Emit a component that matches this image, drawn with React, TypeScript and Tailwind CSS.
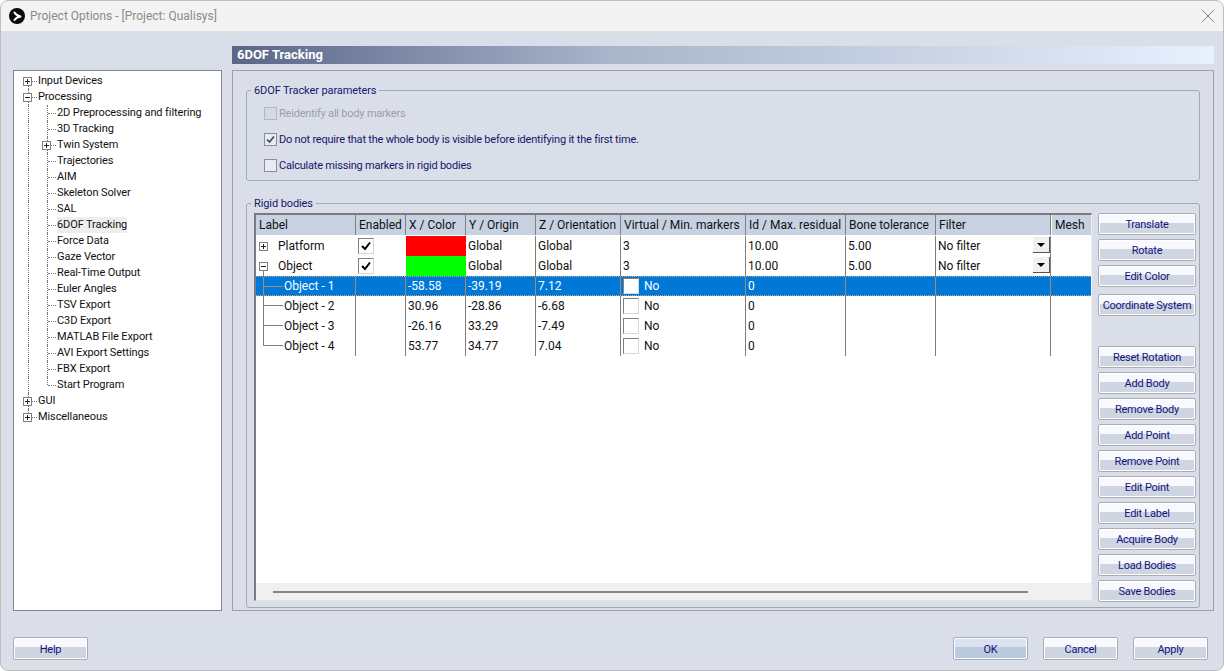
import { X } from 'lucide-react';

type TreeItem = { label: string; level: 0 | 1; box?: '+' | '-'; last?: boolean; first?: boolean };

const treeItems: TreeItem[] = [
  { label: 'Input Devices', level: 0, box: '+', first: true },
  { label: 'Processing', level: 0, box: '-' },
  { label: '2D Preprocessing and filtering', level: 1 },
  { label: '3D Tracking', level: 1 },
  { label: 'Twin System', level: 1, box: '+' },
  { label: 'Trajectories', level: 1 },
  { label: 'AIM', level: 1 },
  { label: 'Skeleton Solver', level: 1 },
  { label: 'SAL', level: 1 },
  { label: '6DOF Tracking', level: 1 },
  { label: 'Force Data', level: 1 },
  { label: 'Gaze Vector', level: 1 },
  { label: 'Real-Time Output', level: 1 },
  { label: 'Euler Angles', level: 1 },
  { label: 'TSV Export', level: 1 },
  { label: 'C3D Export', level: 1 },
  { label: 'MATLAB File Export', level: 1 },
  { label: 'AVI Export Settings', level: 1 },
  { label: 'FBX Export', level: 1 },
  { label: 'Start Program', level: 1, last: true },
  { label: 'GUI', level: 0, box: '+' },
  { label: 'Miscellaneous', level: 0, box: '+', last: true },
];

const sideButtons = [
  { label: 'Translate', cls: 'mb-[4px]' },
  { label: 'Rotate', cls: 'mb-[4px]' },
  { label: 'Edit Color', cls: 'mb-[7px]' },
  { label: 'Coordinate System', cls: 'mb-[30px]' },
  { label: 'Reset Rotation', cls: 'mb-[4px]' },
  { label: 'Add Body', cls: 'mb-[4px]' },
  { label: 'Remove Body', cls: 'mb-[4px]' },
  { label: 'Add Point', cls: 'mb-[4px]' },
  { label: 'Remove Point', cls: 'mb-[4px]' },
  { label: 'Edit Point', cls: 'mb-[4px]' },
  { label: 'Edit Label', cls: 'mb-[4px]' },
  { label: 'Acquire Body', cls: 'mb-[4px]' },
  { label: 'Load Bodies', cls: 'mb-[4px]' },
  { label: 'Save Bodies', cls: '' },
];

const points = [
  { label: 'Object - 1', x: '-58.58', y: '-39.19', z: '7.12', selected: true },
  { label: 'Object - 2', x: '30.96', y: '-28.86', z: '-6.68' },
  { label: 'Object - 3', x: '-26.16', y: '33.29', z: '-7.49' },
  { label: 'Object - 4', x: '53.77', y: '34.77', z: '7.04', last: true },
];

function ExpandBox({ sign, className }: { sign: '+' | '-'; className: string }) {
  return (
    <span className={`absolute w-[9px] h-[9px] bg-white border border-[#808080] ${className}`}>
      <span className="absolute left-[1px] top-[3px] w-[5px] h-px bg-[#222]" />
      {sign === '+' && <span className="absolute left-[3px] top-[1px] w-px h-[5px] bg-[#222]" />}
    </span>
  );
}

function Guide({ item, own }: { item: TreeItem; own: boolean }) {
  const vertical = own
    ? item.level === 0
      ? item.first
        ? 'top-2 bottom-0'
        : item.last
          ? 'top-0 h-2'
          : 'top-0 bottom-0'
      : item.last
        ? 'top-0 h-2'
        : 'top-0 bottom-0'
    : 'top-0 bottom-0';
  return (
    <span className="relative w-[19px] h-4 shrink-0">
      <span className={`absolute left-[9px] w-0 border-l border-dotted border-[#777] ${vertical}`} />
      {own && <span className="absolute left-[10px] top-2 w-[8px] h-0 border-t border-dotted border-[#777]" />}
      {own && item.box && <ExpandBox sign={item.box} className="left-[4px] top-[4px]" />}
    </span>
  );
}

function TreeRow({ item }: { item: TreeItem }) {
  return (
    <div className="flex items-center h-4">
      {item.level === 0 ? (
        <Guide item={item} own />
      ) : (
        <>
          <Guide item={{ label: '', level: 0 }} own={false} />
          <Guide item={item} own />
        </>
      )}
      <span className={`text-[11px] leading-4 tracking-[-0.1px] whitespace-nowrap text-[#111] ${item.label === '6DOF Tracking' ? 'bg-[#eeeeee]' : ''}`}>
        {item.label}
      </span>
    </div>
  );
}

function WinButton({ label, className = '', pressed = false }: { label: string; className?: string; pressed?: boolean }) {
  return (
    <button
      className={`flex items-center justify-center rounded-[2px] border border-[#a9adb6] shadow-[inset_0_0_0_1px_#ffffff] text-[11px] leading-none tracking-[-0.25px] whitespace-nowrap text-[#14147f] ${
        pressed
          ? 'bg-[linear-gradient(#d9e2ef_45%,#bccadf_45%)]'
          : 'bg-[linear-gradient(#f8f9fc_45%,#cfd6e2_45%)]'
      } ${className}`}
    >
      {label}
    </button>
  );
}

function Legend({ children }: { children: string }) {
  return (
    <span className="absolute left-[4px] -top-[8px] px-[3px] bg-[#dadee8] text-[11px] leading-4 tracking-[-0.1px] text-[#16166e]">
      {children}
    </span>
  );
}

function CheckRow({ label, checked, disabled }: { label: string; checked?: boolean; disabled?: boolean }) {
  return (
    <div className="flex items-center h-4 gap-[2px]">
      <span
        className={`w-[13px] h-[13px] flex items-center justify-center border ${
          disabled ? 'border-[#b4b8c2] bg-[#d5d9e3]' : 'border-[#8d8f96] bg-[#e8ebf1]'
        }`}
      >
        {checked && (
          <svg viewBox="0 0 11 11" className="w-[11px] h-[11px]">
            <path d="M2 5.5 L4.5 8 L9 2.5" fill="none" stroke="#3d4a70" strokeWidth="1.7" />
          </svg>
        )}
      </span>
      <span className={`text-[11px] leading-4 pt-px tracking-[-0.21px] ${disabled ? 'text-[#9a9db0]' : 'text-[#16166e]'}`}>{label}</span>
    </div>
  );
}

function GridCheck({ checked }: { checked?: boolean }) {
  return (
    <span className="flex items-center justify-center w-[16px] h-[16px] bg-white border border-t-[#808080] border-l-[#808080] border-r-[#d8d8d8] border-b-[#d8d8d8] shrink-0">
      {checked && (
        <svg viewBox="0 0 12 12" className="w-[12px] h-[12px]">
          <path d="M2 6 L5 9 L10 2.5" fill="none" stroke="#000" strokeWidth="2" />
        </svg>
      )}
    </span>
  );
}

const columns = [
  { label: 'Label', w: 'w-[100px]' },
  { label: 'Enabled', w: 'w-[50px]' },
  { label: 'X / Color', w: 'w-[60px]' },
  { label: 'Y / Origin', w: 'w-[70px]' },
  { label: 'Z / Orientation', w: 'w-[85px]' },
  { label: 'Virtual / Min. markers', w: 'w-[125px]' },
  { label: 'Id / Max. residual', w: 'w-[100px]' },
  { label: 'Bone tolerance', w: 'w-[90px]' },
  { label: 'Filter', w: 'w-[115px]' },
];

function Cell({ w, className = '', children }: { w: string; className?: string; children?: React.ReactNode }) {
  return (
    <div className={`${w} h-full shrink-0 flex items-center pl-[2px] border-r border-[#808080] ${className}`}>
      {children}
    </div>
  );
}

function BodyRow({ label, box, color, open }: { label: string; box: '+' | '-'; color: string; open?: boolean }) {
  return (
    <div className="flex h-5 text-[12px] text-[#111]">
      <Cell w="w-[100px]" className="relative !pl-[22px] !border-r-0">
        <ExpandBox sign={box} className="left-[3px] top-[6px]" />
        {open && <span className="absolute left-[7px] top-[15px] bottom-0 w-px bg-[#808080]" />}
        {label}
      </Cell>
      <Cell w="w-[50px]" className="!border-r-0">
        <GridCheck checked />
      </Cell>
      <div className={`w-[60px] h-full shrink-0 ${color}`} />
      <Cell w="w-[70px]">Global</Cell>
      <Cell w="w-[85px]">Global</Cell>
      <Cell w="w-[125px]">3</Cell>
      <Cell w="w-[100px]">10.00</Cell>
      <Cell w="w-[90px]">5.00</Cell>
      <Cell w="w-[115px]" className="relative">
        No filter
        <span className="absolute right-0 top-[1px] w-[17px] h-[16px] flex items-center justify-center bg-[#f0f0f0] border-r border-b border-[#555]">
          <span className="w-0 h-0 border-l-[4px] border-r-[4px] border-t-[4px] border-l-transparent border-r-transparent border-t-black" />
        </span>
      </Cell>
    </div>
  );
}

function PointRow({ p }: { p: (typeof points)[number] }) {
  const line = p.selected ? '!border-r-[#a38a6b]' : '';
  return (
    <div
      className={`flex h-5 text-[12px] ${
        p.selected ? 'bg-[#0078d7] text-white border-y border-dotted border-y-[#c9a27a]' : 'text-[#111]'
      }`}
    >
      <Cell w="w-[100px]" className={`relative !pl-[28px] ${line}`}>
        <span className={`absolute left-[7px] top-0 w-px ${p.last ? 'h-[10px]' : 'h-full'} ${p.selected ? 'bg-[#a38a6b]' : 'bg-[#808080]'}`} />
        <span className={`absolute left-[7px] top-[9px] w-[20px] h-px ${p.selected ? 'bg-[#a38a6b]' : 'bg-[#808080]'}`} />
        {p.label}
      </Cell>
      <Cell w="w-[50px]" className={line} />
      <Cell w="w-[60px]" className={line}>{p.x}</Cell>
      <Cell w="w-[70px]" className={line}>{p.y}</Cell>
      <Cell w="w-[85px]" className={line}>{p.z}</Cell>
      <Cell w="w-[125px]" className={`gap-[5px] ${line}`}>
        <GridCheck />
        No
      </Cell>
      <Cell w="w-[100px]" className={line}>0</Cell>
      <Cell w="w-[90px]" className={line} />
      <Cell w="w-[115px]" className={line} />
      {p.selected && <div className="w-[41px] h-full" />}
    </div>
  );
}

export default function App() {
  return (
    <div className="w-[1224px] h-[671px] bg-white font-[family-name:Roboto,sans-serif]">
      <div className="w-full h-full flex flex-col border border-[#bdbdbd] rounded-lg overflow-hidden bg-[#dadee8]">
        {/* title bar */}
        <div className="h-[30px] shrink-0 bg-[#f3f3f3] flex items-center pl-[8px] pr-[4px]">
          <svg viewBox="0 0 16 16" className="w-[16px] h-[16px] mr-[5px] shrink-0">
            <circle cx="8" cy="8" r="8" fill="#0a0a0a" />
            <path d="M5.5 4.5 Q7 7.5 11.5 8.5 Q7.5 9 5.5 12" fill="none" stroke="#fff" strokeWidth="2" strokeLinecap="round" strokeLinejoin="round" />
          </svg>
          <span className="text-[12px] text-[#8a8a8a]">Project Options - [Project: Qualisys]</span>
          <X className="ml-auto w-[22px] h-[22px] text-[#777]" strokeWidth={1} />
        </div>

        {/* main area */}
        <div className="flex flex-1 pl-[12px] pr-[9px]">
          {/* nav tree */}
          <div className="mt-[39px] w-[209px] h-[541px] shrink-0 bg-white border border-[#80868f] pt-[2px] pl-[5px]">
            {treeItems.map((item) => (
              <TreeRow key={item.label} item={item} />
            ))}
          </div>

          <div className="ml-[10px] w-[982px] pt-[15px]">
            <div className="h-[18px] flex items-center pl-[5px] bg-linear-to-r from-[#5a6688] via-[#a9b4ca] via-38% to-[#e7f1fe] text-[13px] font-bold text-white">
              6DOF Tracking
            </div>

            <div className="mt-[6px] h-[541px] border border-[#a0a2a8] pt-[19px] pl-[13px] pr-[13px]">
              {/* tracker parameters */}
              <div className="relative h-[91px] border border-[#a4a8b2] rounded-[3px] pl-[17px] pt-[14px] flex flex-col gap-[10px] shrink-0">
                <Legend>6DOF Tracker parameters</Legend>
                <CheckRow label="Reidentify all body markers" disabled />
                <CheckRow label="Do not require that the whole body is visible before identifying it the first time." checked />
                <CheckRow label="Calculate missing markers in rigid bodies" />
              </div>

              {/* rigid bodies */}
              <div className="relative mt-[22px] h-[405px] border border-[#a4a8b2] rounded-[3px] pl-[7px] pt-[9px] flex">
                <Legend>Rigid bodies</Legend>

                <div className="w-[838px] h-[388px] shrink-0 flex flex-col bg-white border-l-2 border-t-2 border-[#7b7b7b] border-b border-b-[#e4e4e4] border-r border-r-[#eeeeee]">
                  <div className="flex h-[21px] shrink-0 bg-[#c6d1e2] text-[12px] text-[#111] border-b border-white">
                    {columns.map((c) => (
                      <Cell key={c.label} w={c.w} className="!pl-[3px] whitespace-nowrap">
                        {c.label}
                      </Cell>
                    ))}
                    <div className="flex items-center pl-[3px] border-l border-white">Mesh</div>
                  </div>

                  <BodyRow label="Platform" box="+" color="bg-[#ff0000]" />
                  <BodyRow label="Object" box="-" color="bg-[#00ff00]" open />
                  {points.map((p) => (
                    <PointRow key={p.label} p={p} />
                  ))}

                  {/* horizontal scroll */}
                  <div className="mt-auto h-[17px] bg-[#f0f0f0] flex items-center pl-[17px]">
                    <div className="w-[755px] h-[2px] bg-[#858585]" />
                  </div>
                </div>

                <div className="ml-[6px] w-[98px] flex flex-col">
                  {sideButtons.map((b) => (
                    <WinButton key={b.label} label={b.label} className={`h-[22px] shrink-0 ${b.cls}`} />
                  ))}
                </div>
              </div>
            </div>
          </div>
        </div>

        {/* footer */}
        <div className="h-[33px] shrink-0 flex pl-[12px] pr-[15px]">
          <WinButton label="Help" className="w-[75px] h-[23px] pt-px" />
          <WinButton label="OK" pressed className="ml-auto w-[75px] h-[23px] pt-px" />
          <WinButton label="Cancel" className="ml-[15px] w-[75px] h-[23px] pt-px" />
          <WinButton label="Apply" className="ml-[15px] w-[75px] h-[23px] pt-px" />
        </div>
      </div>
    </div>
  );
}
